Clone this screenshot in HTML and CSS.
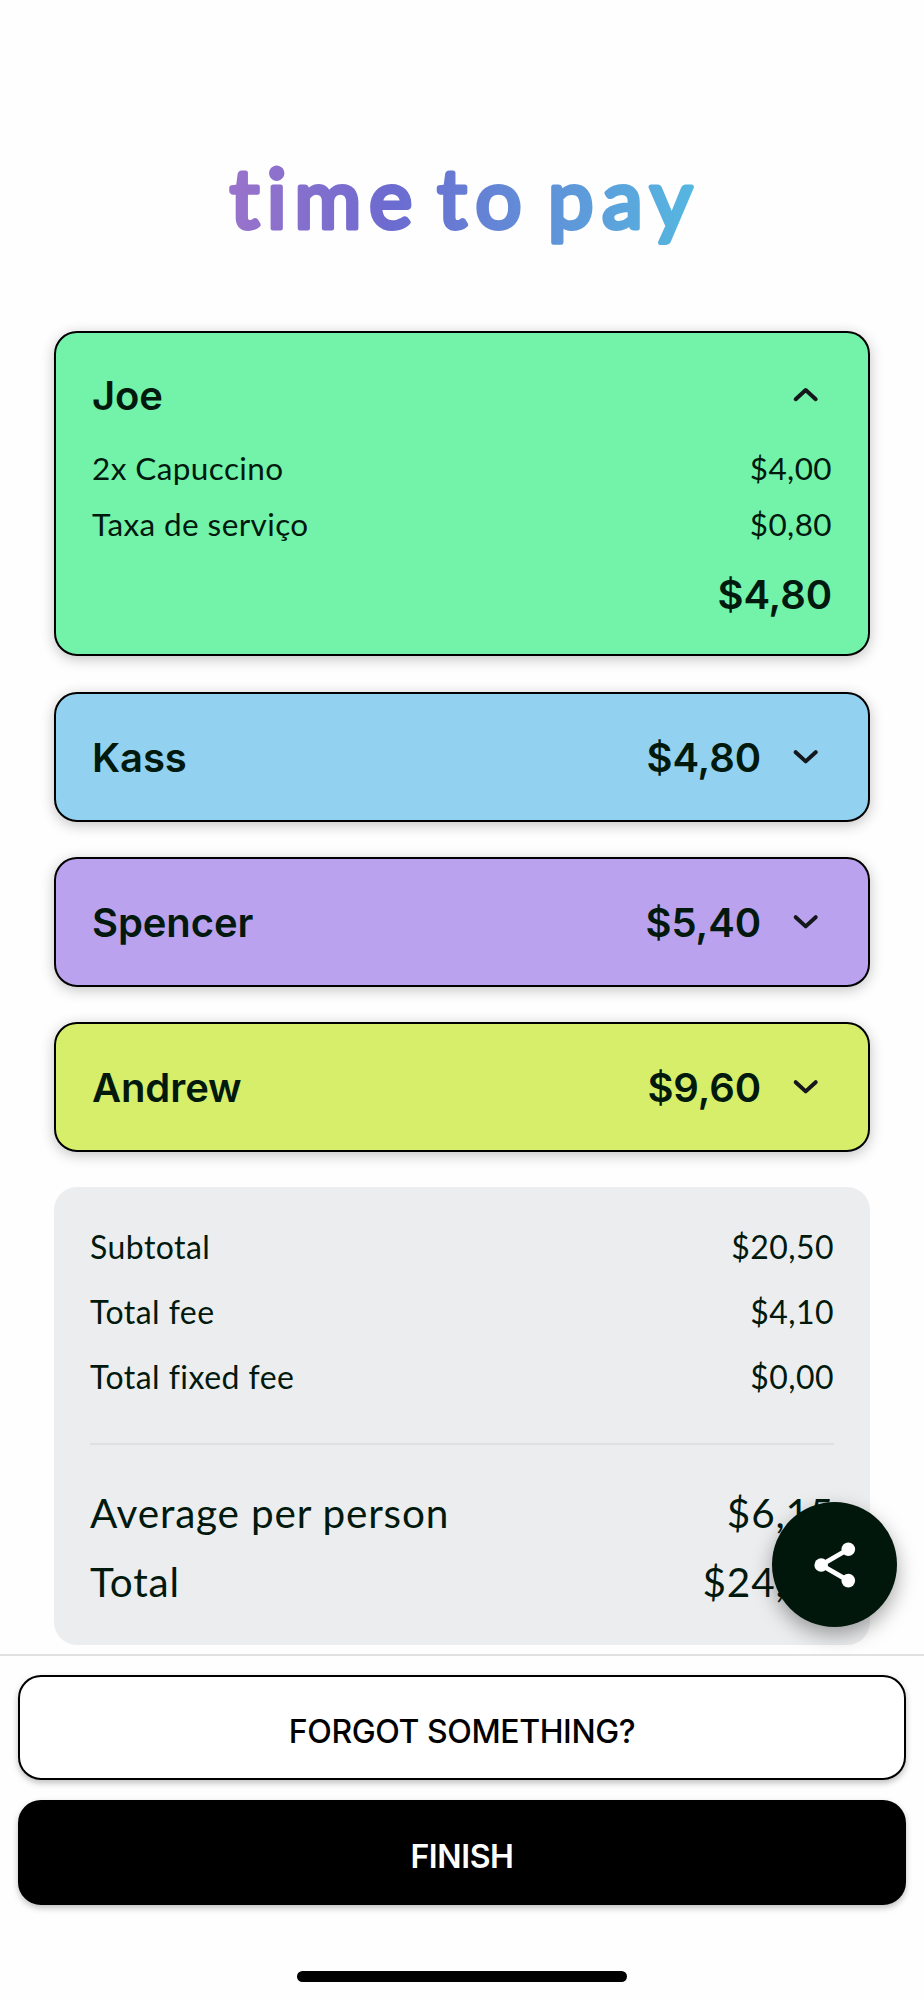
FILE: index.html
```
<!DOCTYPE html>
<html lang="en">
<head>
<meta charset="utf-8">
<title>time to pay</title>
<link rel="stylesheet" href="styles.css">
</head>
<body>
<svg class="sprite" aria-hidden="true">
  <symbol id="chevron-down" viewBox="0 0 28 18"><path d="M3.7 4.2 13.7 13.4 23.7 4.2"/></symbol>
  <symbol id="chevron-up" viewBox="0 0 28 18"><path d="M3.7 13.2 13.7 4 23.7 13.2"/></symbol>
</svg>
<div class="screen">
  <main class="content">
    <h1 class="title">
      <svg class="title-art" viewBox="0 0 924 120" role="img" aria-label="time to pay">
        <defs>
          <linearGradient id="title-fill" gradientUnits="userSpaceOnUse" x1="228" y1="60" x2="694" y2="60">
            <stop offset="0" stop-color="#9a73cb"/>
            <stop offset=".35" stop-color="#6c6bd0"/>
            <stop offset="1" stop-color="#55b7e0"/>
          </linearGradient>
        </defs>
        <text class="title-text" y="86"><tspan x="230" textLength="182">time</tspan><tspan x="437.5" textLength="84">to</tspan><tspan x="548" textLength="144">pay</tspan></text>
      </svg>
    </h1>

    <section class="people">
      <article class="card card-green">
        <header class="card-head">
          <span class="name">Joe</span>
          <svg class="chevron"><use href="#chevron-up"/></svg>
        </header>
        <div class="items">
          <div class="item"><span>2x Capuccino</span><span>$4,00</span></div>
          <div class="item"><span>Taxa de serviço</span><span>$0,80</span></div>
        </div>
        <div class="card-total">$4,80</div>
      </article>
      <article class="card card-blue">
        <header class="card-head">
          <span class="name">Kass</span><span class="amount">$4,80</span>
          <svg class="chevron"><use href="#chevron-down"/></svg>
        </header>
      </article>
      <article class="card card-purple">
        <header class="card-head">
          <span class="name">Spencer</span><span class="amount">$5,40</span>
          <svg class="chevron"><use href="#chevron-down"/></svg>
        </header>
      </article>
      <article class="card card-lime">
        <header class="card-head">
          <span class="name">Andrew</span><span class="amount">$9,60</span>
          <svg class="chevron"><use href="#chevron-down"/></svg>
        </header>
      </article>
    </section>

    <section class="summary">
      <div class="row"><span>Subtotal</span><span>$20,50</span></div>
      <div class="row"><span>Total fee</span><span>$4,10</span></div>
      <div class="row"><span>Total fixed fee</span><span>$0,00</span></div>
      <hr class="rule">
      <div class="row row-big"><span>Average per person</span><span>$6,15</span></div>
      <div class="row row-big"><span>Total</span><span>$24,60</span></div>
    </section>
  </main>

  <footer class="footer">
    <button class="btn btn-outline">FORGOT SOMETHING?</button>
    <button class="btn btn-solid">FINISH</button>
    <div class="home-indicator"></div>
  </footer>

  <button class="fab" aria-label="Share">
    <svg class="share" viewBox="0 0 42 48">
      <path d="M34.3 8.2 7.2 24 34.3 39.6"/>
      <circle cx="7.2" cy="24" r="6.8"/><circle cx="34.3" cy="8.2" r="6.8"/><circle cx="34.3" cy="39.6" r="6.8"/>
    </svg>
  </button>
</div>
</body>
</html>
```
FILE: styles.css
```
* { box-sizing: border-box; }

body {
  margin: 0;
  background: #fefefe;
  color: #02190d;
  font-family: Lato, "Noto Sans", sans-serif;
}

.sprite { display: none; }

.screen {
  position: relative;
  display: flex;
  flex-direction: column;
  width: 924px;
  height: 2000px;
  overflow: hidden;
}

.content {
  flex: 1;
  min-height: 0;
  padding: 142px 54px 0;
  overflow: hidden;
}

/* Title */
.title { margin: 0 -54px 68.5px; height: 120px; }
.title-art { display: block; width: 924px; height: 120px; }
.title-text {
  font-family: Lato, sans-serif;
  font-size: 81px;
  font-weight: 400;
  fill: url(#title-fill);
  stroke: url(#title-fill);
  stroke-width: 5px;
  stroke-linejoin: round;
  font-variant-ligatures: none;
}

/* Person cards */
.people { display: flex; flex-direction: column; gap: 35.8px; }

.card {
  padding: 34px 36px;
  border: 2px solid #000;
  border-radius: 23px;
  box-shadow: 0 3px 14px rgba(0, 0, 0, .24);
}
.card-green { background: #73f2aa; }
.card-blue { background: #92d2f0; }
.card-purple { background: #bba2ef; }
.card-lime { background: #d6ee69; }

.card-head { display: flex; align-items: center; height: 57.3px; }
.name, .amount, .card-total {
  font: 600 40px/57.3px Inter, sans-serif;
  letter-spacing: -.1px;
}
.name { flex: 1; padding-top: 1px; }
.amount { margin-right: 31px; padding-top: 1px; }

.chevron {
  width: 28px;
  height: 18px;
  margin-right: 12px;
  fill: none;
  stroke: #14181c;
  stroke-width: 4px;
  stroke-linecap: round;
  stroke-linejoin: round;
}

.items { margin-top: 17.5px; }
.item {
  display: flex;
  justify-content: space-between;
  font-size: 31.5px;
  line-height: 55.5px;
  letter-spacing: .4px;
}
.card-total { margin-top: 17.2px; margin-bottom: -1px; line-height: 52px; text-align: right; }

/* Summary */
.summary {
  height: 457.7px;
  margin-top: 35.5px;
  padding: 28px 36px 0;
  border-radius: 23px;
  background: #ecedef;
}
.row {
  display: flex;
  justify-content: space-between;
  font-size: 32px;
  line-height: 64.9px;
  letter-spacing: .45px;
}
.rule { height: 2px; margin: 33px 0 33px; border: 0; background: #dfe0e2; }
.row-big { font-size: 40.5px; line-height: 69px; letter-spacing: .8px; }

/* Footer */
.footer {
  display: flex;
  flex-direction: column;
  height: 346px;
  padding: 19px 18px 18px;
  border-top: 2px solid #e1e1e1;
}
.btn {
  height: 105px;
  margin: 0 0 20px;
  padding: 7px 0 0;
  border: 2px solid #000;
  border-radius: 23px;
  box-shadow: 0 3px 6px rgba(0, 0, 0, .25);
  font-family: Inter, sans-serif;
  font-size: 32px;
  letter-spacing: -.4px;
}
.btn-outline { background: #fff; color: #000; font-weight: 500; }
.btn-solid { background: #000; color: #fff; font-weight: 600; }
.home-indicator {
  width: 330px;
  height: 11px;
  margin: auto auto 0;
  border-radius: 6px;
  background: #000;
}

/* Floating share button */
.fab {
  position: absolute;
  top: 1502px;
  right: 27px;
  display: grid;
  place-items: center;
  width: 125px;
  height: 125px;
  padding: 0;
  border: 0;
  border-radius: 50%;
  background: #02170b;
  box-shadow: 0 8px 20px rgba(0, 0, 0, .35);
}
.share { width: 42px; height: 48px; fill: #fff; }
.share path { fill: none; stroke: #fff; stroke-width: 4.8px; }
```
